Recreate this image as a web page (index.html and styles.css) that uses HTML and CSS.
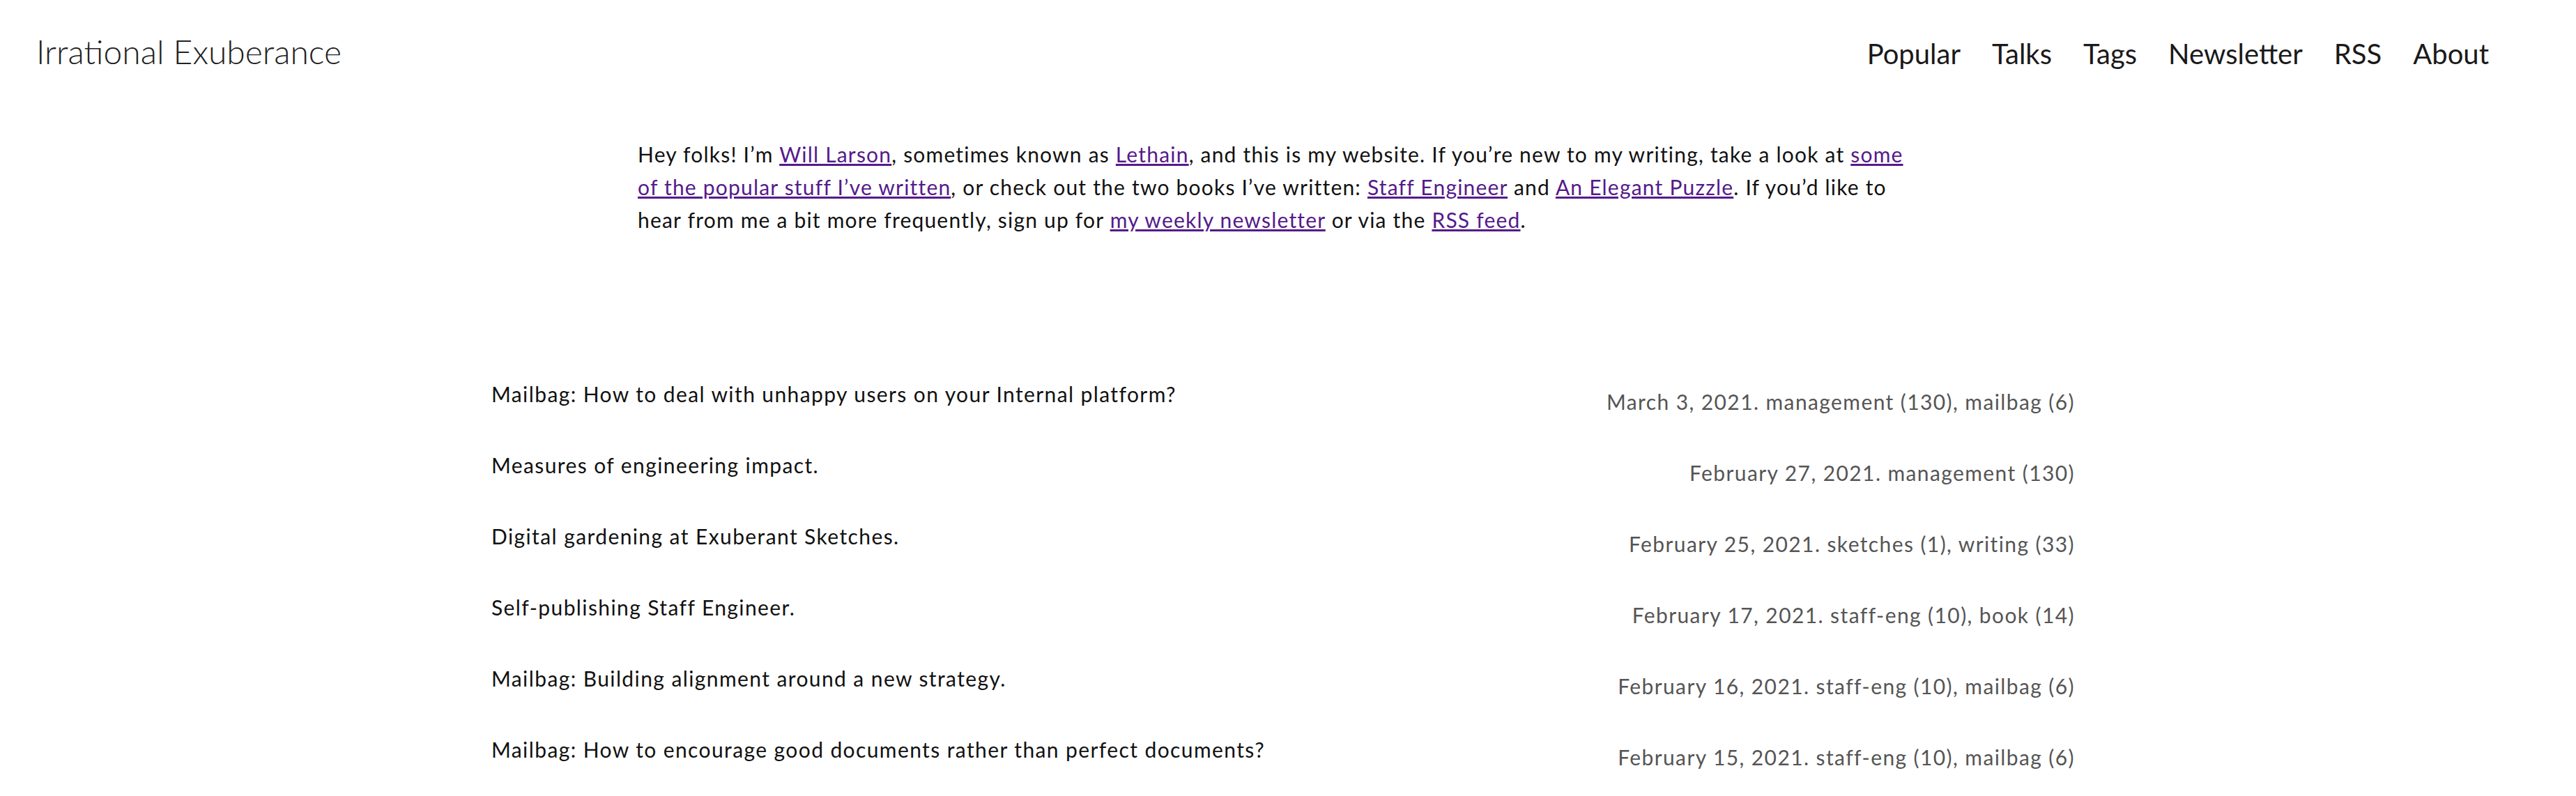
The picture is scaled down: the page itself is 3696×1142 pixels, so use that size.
FILE: index.html
```html
<!DOCTYPE html>
<html lang="en">
<head>
<meta charset="utf-8">
<title>Irrational Exuberance</title>
<link rel="stylesheet" href="styles.css">
</head>
<body>
<header class="site-header">
  <a class="site-title" href="#">Irrational Exuberance</a>
  <nav class="site-nav">
    <a href="#">Popular</a>
    <a href="#">Talks</a>
    <a href="#">Tags</a>
    <a href="#">Newsletter</a>
    <a href="#">RSS</a>
    <a href="#">About</a>
  </nav>
</header>
<main>
  <p class="intro">Hey folks! I’m <a href="#">Will Larson</a>, sometimes known as <a href="#">Lethain</a>, and this is my website. If you’re new to my writing, take a look at <a href="#">some of the popular stuff I’ve written</a>, or check out the two books I’ve written: <a href="#">Staff Engineer</a> and <a href="#">An Elegant Puzzle</a>. If you’d like to hear from me a bit more frequently, sign up for <a href="#">my weekly newsletter</a> or via the <a href="#">RSS feed</a>.</p>
  <ul class="posts">
    <li class="post"><a class="post-title" href="#">Mailbag: How to deal with unhappy users on your Internal platform?</a><span class="post-meta">March 3, 2021. management (130), mailbag (6)</span></li>
    <li class="post"><a class="post-title" href="#">Measures of engineering impact.</a><span class="post-meta">February 27, 2021. management (130)</span></li>
    <li class="post"><a class="post-title" href="#">Digital gardening at Exuberant Sketches.</a><span class="post-meta">February 25, 2021. sketches (1), writing (33)</span></li>
    <li class="post"><a class="post-title" href="#">Self-publishing Staff Engineer.</a><span class="post-meta">February 17, 2021. staff-eng (10), book (14)</span></li>
    <li class="post"><a class="post-title" href="#">Mailbag: Building alignment around a new strategy.</a><span class="post-meta">February 16, 2021. staff-eng (10), mailbag (6)</span></li>
    <li class="post"><a class="post-title" href="#">Mailbag: How to encourage good documents rather than perfect documents?</a><span class="post-meta">February 15, 2021. staff-eng (10), mailbag (6)</span></li>
  </ul>
</main>
</body>
</html>
```
FILE: styles.css
```css
html, body {
  margin: 0;
  padding: 0;
  background: #fff;
}
body {
  font-family: Lato, "Noto Sans", sans-serif;
  color: #111;
}
.site-header {
  display: flex;
  justify-content: space-between;
  align-items: baseline;
  padding: 50px 125px 0 52px;
  line-height: 1;
}
.site-title {
  font-size: 48px;
  font-weight: 300;
  color: #222;
  text-decoration: none;
}
.site-nav {
  display: flex;
  gap: 45px;
}
.site-nav a {
  font-size: 40px;
  color: #1a1a1a;
  text-decoration: none;
}
.intro {
  box-sizing: border-box;
  width: 1866px;
  padding-right: 16px;
  margin: 100px auto 0;
  font-size: 30px;
  letter-spacing: 1.2px;
  line-height: 47px;
}
.intro a {
  color: #551a8b;
}
.posts {
  list-style: none;
  box-sizing: border-box;
  width: 2286px;
  padding: 0 14px 0 0;
  margin: 175px auto 0;
}
.post {
  display: flex;
  justify-content: space-between;
  align-items: flex-start;
  padding: 31px 0 20px;
  font-size: 30px;
  letter-spacing: 1.4px;
  line-height: 40px;
}
.post-title {
  color: #111;
  text-decoration: none;
}
.post-meta {
  padding-top: 11px;
  color: #555;
}
```
